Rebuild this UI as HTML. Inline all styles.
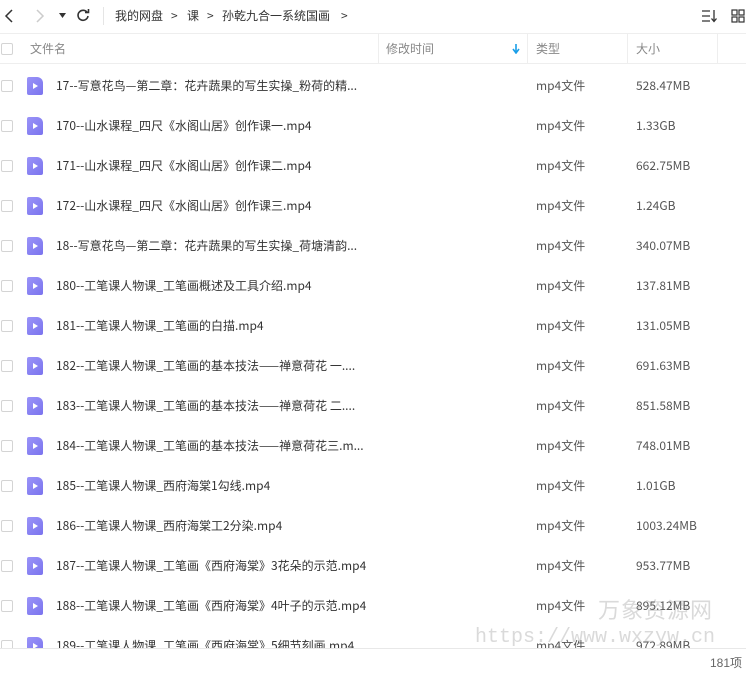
<!DOCTYPE html>
<html><head><meta charset="utf-8"><style>
*{margin:0;padding:0;box-sizing:border-box}
body{width:746px;height:673px;overflow:hidden;background:#fff;font-family:"Liberation Sans","Noto Sans CJK SC",sans-serif;font-size:12px;line-height:16px;color:#333;position:relative}
span{line-height:16px}
.top{position:absolute;left:0;top:0;width:746px;height:34px;border-bottom:1px solid #eee}
.t{position:absolute;top:8px;font-size:12px;color:#333}
.hdr{position:absolute;top:34px;left:0;width:746px;height:30px;border-bottom:1px solid #eee;color:#888}
.sep{position:absolute;top:0;width:1px;height:30px;background:#eee}
.cb{position:absolute;width:12px;height:12px;border:1px solid #d4d4d4;border-radius:2px;left:1px}
.row{position:absolute;left:0;width:746px;height:40px}
.ic{position:absolute;left:27px;top:7px;width:16px;height:18px;background:linear-gradient(135deg,#9a94f8,#7a73ee);border-radius:2px 6px 2px 2px}
.ic:after{content:"";position:absolute;left:6px;top:6px;border-left:5px solid #fff;border-top:3px solid transparent;border-bottom:3px solid transparent}
.n{position:absolute;left:56px;top:8px;color:#333;white-space:nowrap;height:16px}
.ty{position:absolute;left:536px;top:8px;color:#555;height:16px}
.sz{position:absolute;left:636px;top:8px;color:#555;height:16px;font-family:"Noto Sans CJK SC","Liberation Sans",sans-serif}
.n,.ty{font-family:"Noto Sans CJK SC","Liberation Sans",sans-serif}
.list{position:absolute;top:64px;left:0;width:746px;height:584px;overflow:hidden}
.foot{position:absolute;top:648px;left:0;width:746px;height:25px;border-top:1px solid #e8e8e8}
.wm{position:absolute;color:rgba(150,150,150,.35);white-space:nowrap}
.top .t,.hdr span{font-family:"Noto Sans CJK SC","Liberation Sans",sans-serif}
</style></head><body>
<div class="top">
<svg style="position:absolute;left:4px;top:9px" width="10" height="14"><path d="M8 1L2 7L8 13" fill="none" stroke="#333" stroke-width="1.5"/></svg>
<svg style="position:absolute;left:35px;top:9px" width="10" height="14"><path d="M2 1L8 7L2 13" fill="none" stroke="#ccc" stroke-width="1.5"/></svg>
<svg style="position:absolute;left:59px;top:13px" width="7" height="5"><path d="M0 0H7L3.5 5Z" fill="#333"/></svg>
<svg style="position:absolute;left:76px;top:8px" width="14" height="14"><path d="M11.5 5A5 5 0 1 0 12 8" fill="none" stroke="#333" stroke-width="1.6"/><path d="M9 4.5H12.5V1" fill="none" stroke="#333" stroke-width="1.6"/></svg>
<div style="position:absolute;left:103px;top:7px;width:1px;height:18px;background:#e5e5e5"></div>
<span class="t" style="left:115px">我的网盘</span><span class="t" style="left:171px">&gt;</span>
<span class="t" style="left:187px">课</span><span class="t" style="left:207px">&gt;</span>
<span class="t" style="left:222px">孙乾九合一系统国画</span><span class="t" style="left:341px">&gt;</span>
<svg style="position:absolute;left:701px;top:9px" width="18" height="14"><path d="M1 2H9M1 7H9M1 12H9" stroke="#333" stroke-width="1.3"/><path d="M13 1V12M10.5 9.5L13 12.5L15.5 9.5" fill="none" stroke="#333" stroke-width="1.3"/></svg>
<svg style="position:absolute;left:731px;top:9px" width="14" height="14"><rect x="1" y="1" width="5" height="5" fill="none" stroke="#333" stroke-width="1.2"/><rect x="8" y="1" width="5" height="5" fill="none" stroke="#333" stroke-width="1.2"/><rect x="1" y="8" width="5" height="5" fill="none" stroke="#333" stroke-width="1.2"/><rect x="8" y="8" width="5" height="5" fill="none" stroke="#333" stroke-width="1.2"/></svg>
</div>
<div class="hdr">
<div class="cb" style="top:9px"></div>
<span style="position:absolute;left:30px;top:7px">文件名</span>
<div class="sep" style="left:378px"></div>
<span style="position:absolute;left:386px;top:7px">修改时间</span>
<svg style="position:absolute;left:512px;top:10px" width="8" height="10"><path d="M4 0V8M1 5L4 9L7 5" fill="none" stroke="#1a9ee8" stroke-width="1.6"/></svg>
<div class="sep" style="left:527px"></div>
<span style="position:absolute;left:536px;top:7px">类型</span>
<div class="sep" style="left:627px"></div>
<span style="position:absolute;left:636px;top:7px">大小</span>
<div class="sep" style="left:717px"></div>
</div>
<div class="list">
<div class="row" style="top:6px"><div class="cb" style="top:10px"></div><div class="ic"></div><span class="n">17--写意花鸟—第二章：花卉蔬果的写生实操_粉荷的精...</span><span class="ty">mp4文件</span><span class="sz">528.47MB</span></div>
<div class="row" style="top:46px"><div class="cb" style="top:10px"></div><div class="ic"></div><span class="n">170--山水课程_四尺《水阁山居》创作课一.mp4</span><span class="ty">mp4文件</span><span class="sz">1.33GB</span></div>
<div class="row" style="top:86px"><div class="cb" style="top:10px"></div><div class="ic"></div><span class="n">171--山水课程_四尺《水阁山居》创作课二.mp4</span><span class="ty">mp4文件</span><span class="sz">662.75MB</span></div>
<div class="row" style="top:126px"><div class="cb" style="top:10px"></div><div class="ic"></div><span class="n">172--山水课程_四尺《水阁山居》创作课三.mp4</span><span class="ty">mp4文件</span><span class="sz">1.24GB</span></div>
<div class="row" style="top:166px"><div class="cb" style="top:10px"></div><div class="ic"></div><span class="n">18--写意花鸟—第二章：花卉蔬果的写生实操_荷塘清韵...</span><span class="ty">mp4文件</span><span class="sz">340.07MB</span></div>
<div class="row" style="top:206px"><div class="cb" style="top:10px"></div><div class="ic"></div><span class="n">180--工笔课人物课_工笔画概述及工具介绍.mp4</span><span class="ty">mp4文件</span><span class="sz">137.81MB</span></div>
<div class="row" style="top:246px"><div class="cb" style="top:10px"></div><div class="ic"></div><span class="n">181--工笔课人物课_工笔画的白描.mp4</span><span class="ty">mp4文件</span><span class="sz">131.05MB</span></div>
<div class="row" style="top:286px"><div class="cb" style="top:10px"></div><div class="ic"></div><span class="n">182--工笔课人物课_工笔画的基本技法——禅意荷花 一....</span><span class="ty">mp4文件</span><span class="sz">691.63MB</span></div>
<div class="row" style="top:326px"><div class="cb" style="top:10px"></div><div class="ic"></div><span class="n">183--工笔课人物课_工笔画的基本技法——禅意荷花 二....</span><span class="ty">mp4文件</span><span class="sz">851.58MB</span></div>
<div class="row" style="top:366px"><div class="cb" style="top:10px"></div><div class="ic"></div><span class="n">184--工笔课人物课_工笔画的基本技法——禅意荷花三.m...</span><span class="ty">mp4文件</span><span class="sz">748.01MB</span></div>
<div class="row" style="top:406px"><div class="cb" style="top:10px"></div><div class="ic"></div><span class="n">185--工笔课人物课_西府海棠1勾线.mp4</span><span class="ty">mp4文件</span><span class="sz">1.01GB</span></div>
<div class="row" style="top:446px"><div class="cb" style="top:10px"></div><div class="ic"></div><span class="n">186--工笔课人物课_西府海棠工2分染.mp4</span><span class="ty">mp4文件</span><span class="sz">1003.24MB</span></div>
<div class="row" style="top:486px"><div class="cb" style="top:10px"></div><div class="ic"></div><span class="n">187--工笔课人物课_工笔画《西府海棠》3花朵的示范.mp4</span><span class="ty">mp4文件</span><span class="sz">953.77MB</span></div>
<div class="row" style="top:526px"><div class="cb" style="top:10px"></div><div class="ic"></div><span class="n">188--工笔课人物课_工笔画《西府海棠》4叶子的示范.mp4</span><span class="ty">mp4文件</span><span class="sz">895.12MB</span></div>
<div class="row" style="top:566px"><div class="cb" style="top:10px"></div><div class="ic"></div><span class="n">189--工笔课人物课_工笔画《西府海棠》5细节刻画.mp4</span><span class="ty">mp4文件</span><span class="sz">972.89MB</span></div>
</div>
<div class="wm" style="left:598px;top:597px;font-size:22px;line-height:28px;letter-spacing:1px">万象资源网</div>
<div class="wm" style="left:475px;top:625px;font-size:20px;line-height:26px;font-family:'Liberation Mono',monospace">https://www.wxzyw.cn</div>
<div class="foot"><span style="position:absolute;right:4px;top:6px;color:#666">181项</span></div>
</body></html>
